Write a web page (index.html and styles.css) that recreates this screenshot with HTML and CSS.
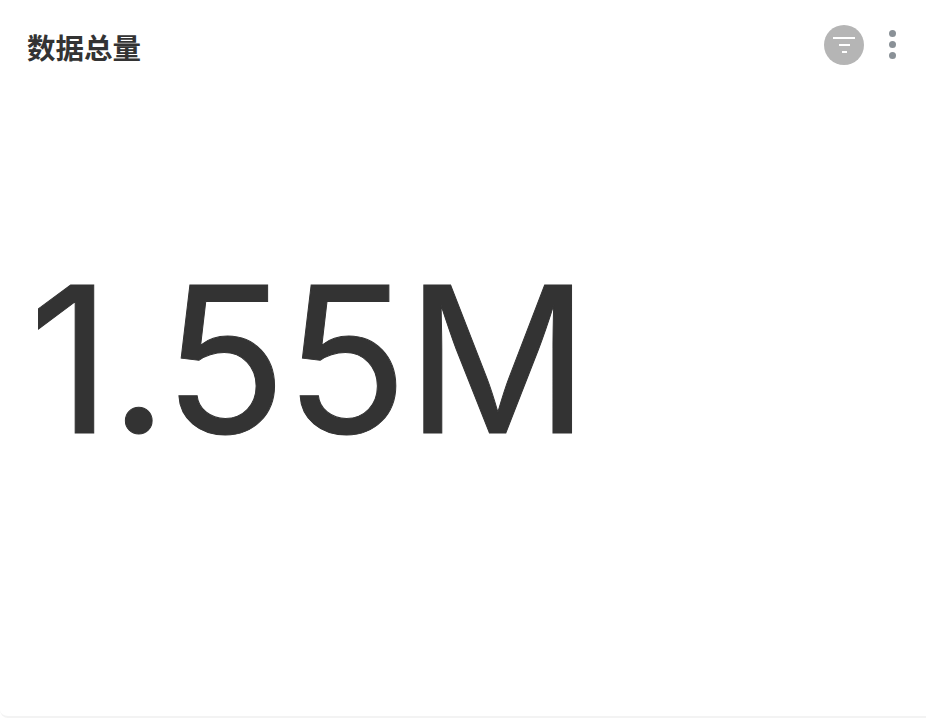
FILE: index.html
```html
<!DOCTYPE html>
<html lang="zh">
<head>
    <meta charset="UTF-8">
    <meta name="viewport" content="width=device-width, initial-scale=1.0">
    <title>数据总量</title>
    <link rel="stylesheet" href="styles.css">
</head>
<body>
    <div class="card">
        <div class="card-header">
            <h2 class="card-title">数据总量</h2>
            <div class="card-actions">
                <span class="filter-btn">
                    <svg width="24" height="24" viewBox="0 0 24 24" fill="none" stroke="#fff" stroke-width="2">
                        <path d="M1 5H23M7 12H18M10 19H15"/>
                    </svg>
                </span>
                <span class="more-btn">
                    <i class="dot"></i>
                    <i class="dot"></i>
                    <i class="dot"></i>
                </span>
            </div>
        </div>
        <div class="card-body">
            <div class="metric">1.55M</div>
        </div>
    </div>
</body>
</html>
```

FILE: styles.css
```css
html, body {
    height: 100%;
}

body {
    margin: 0;
    background-color: #fff;
    font-family: Inter, "Noto Sans CJK SC", sans-serif;
    color: #333;
}

.card {
    height: 716px;
    border-bottom: 2px solid #f3f3f3;
    border-radius: 0 0 0 8px;
    display: flex;
    flex-direction: column;
}

.card-header {
    display: flex;
    align-items: center;
    justify-content: space-between;
    padding: 25px 26px 0 27px;
    height: 39px;
}

.card-title {
    margin: 4px 0 0;
    font-size: 28.5px;
    font-weight: 700;
    font-family: "Noto Sans CJK SC", sans-serif;
}

.card-actions {
    display: flex;
    align-items: center;
    gap: 20px;
}

.filter-btn {
    width: 40px;
    height: 40px;
    border-radius: 50%;
    background-color: #b5b5b5;
    display: flex;
    align-items: center;
    justify-content: center;
}

.more-btn {
    display: flex;
    flex-direction: column;
    gap: 4px;
    width: 16px;
    align-items: center;
}

.dot {
    width: 7px;
    height: 7px;
    border-radius: 50%;
    background-color: #8a9197;
}

.card-body {
    flex: 1;
    display: flex;
    align-items: center;
    padding: 0 0 62px 29px;
}

.metric {
    font-size: 203px;
    font-weight: 400;
    letter-spacing: -2px;
    line-height: 1;
    -webkit-text-stroke: 1px #333;
}
```
